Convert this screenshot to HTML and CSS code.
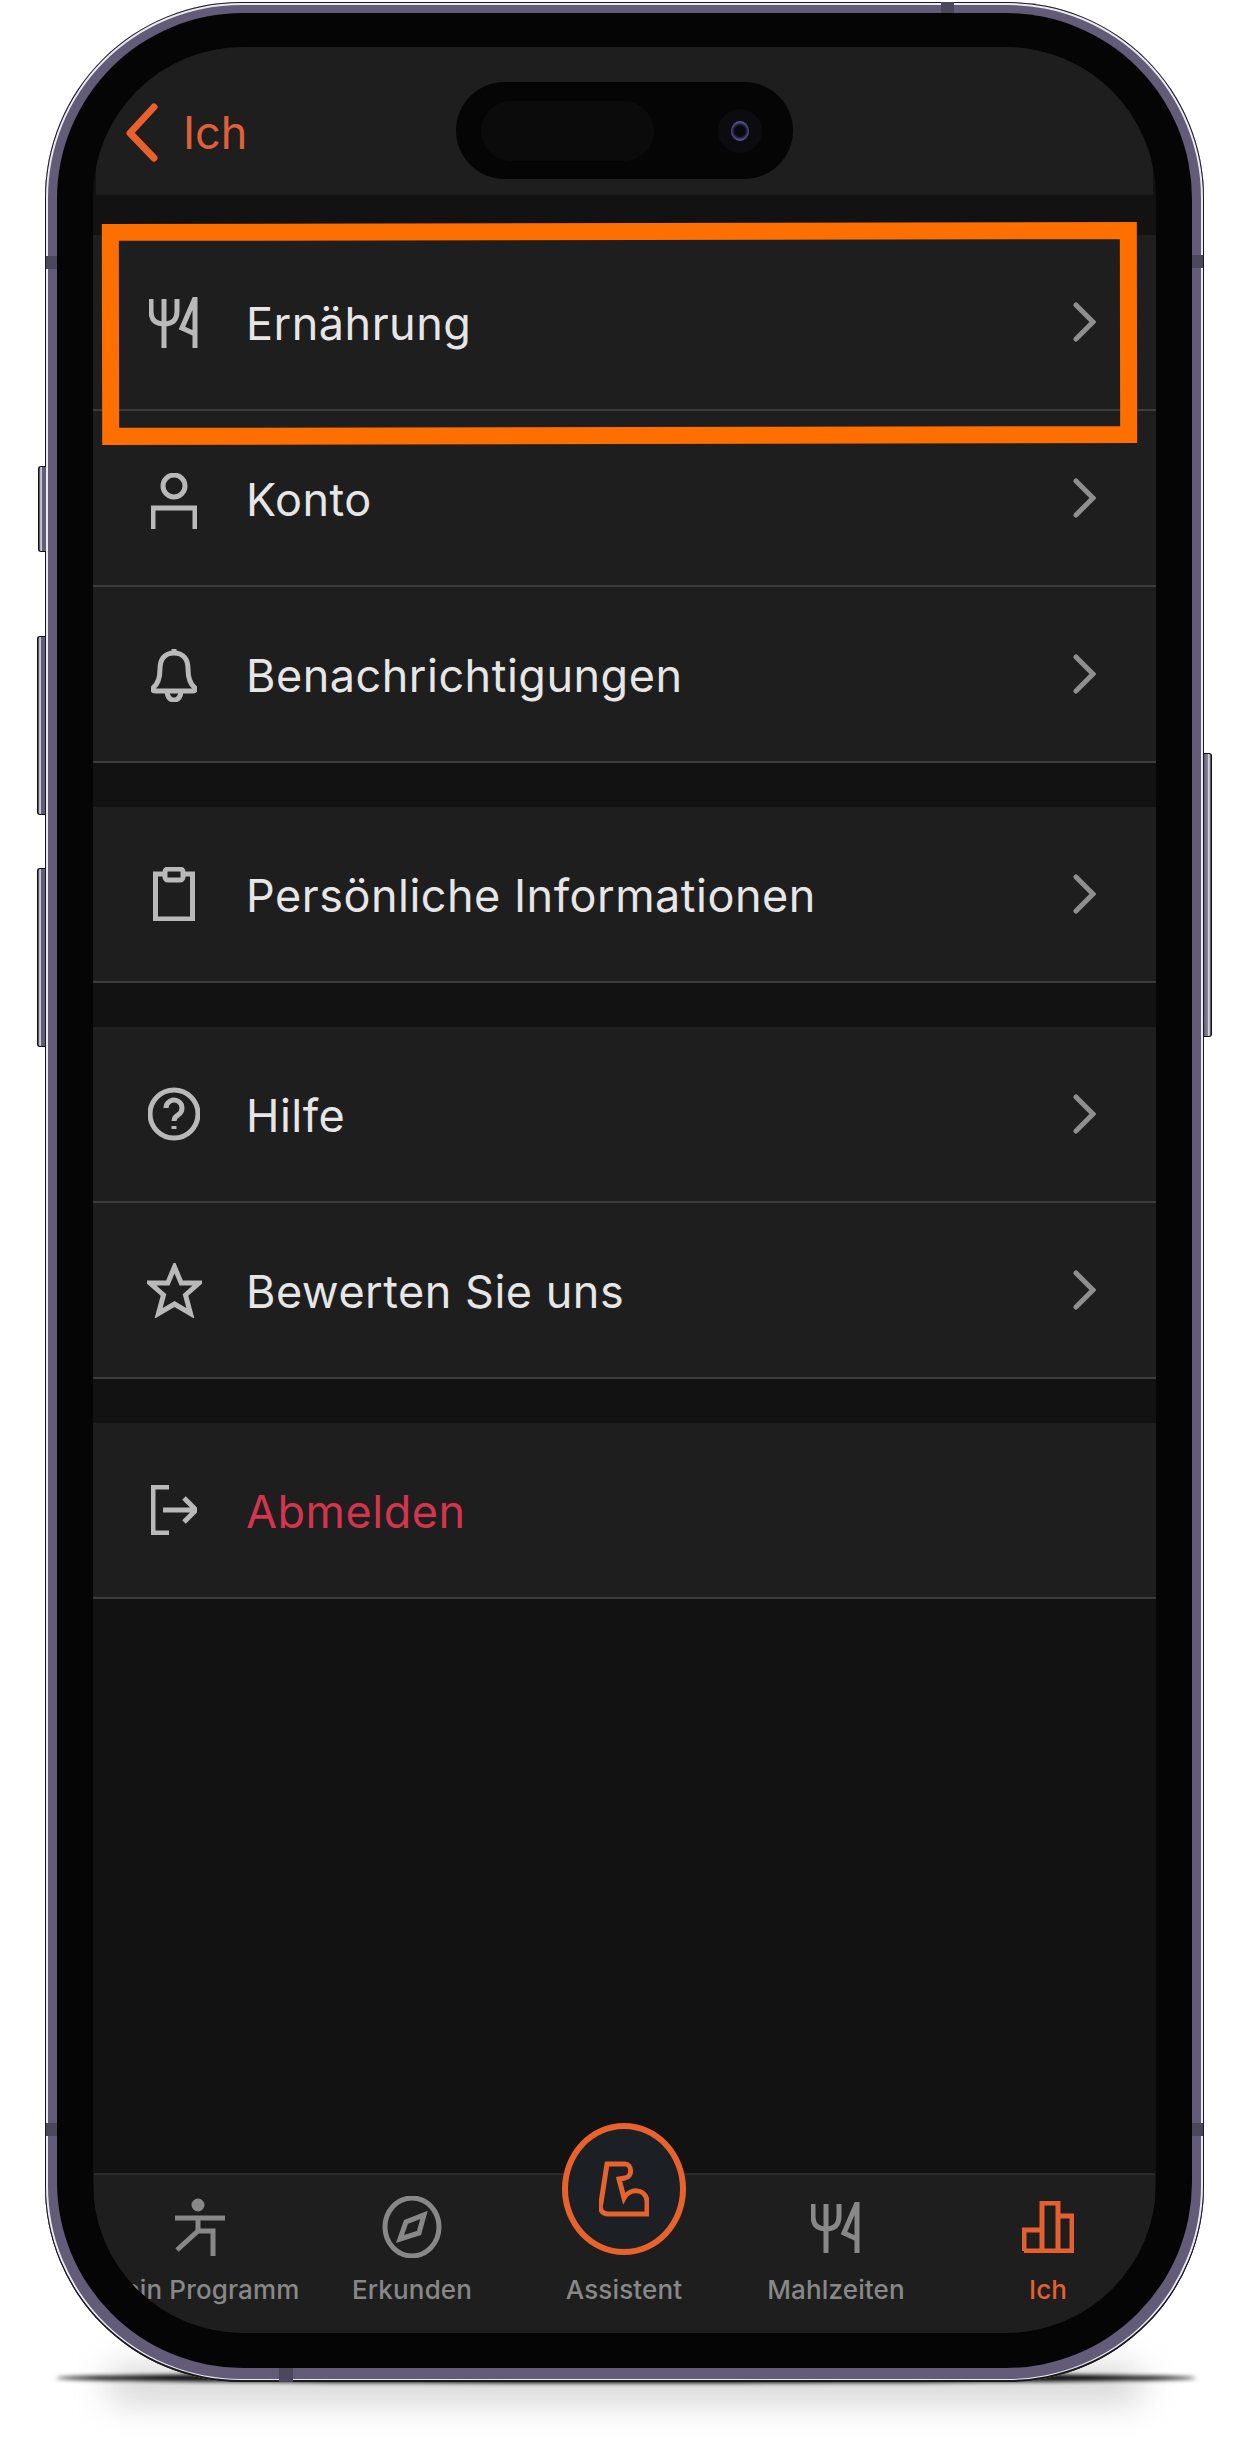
FILE: index.html
```html
<!DOCTYPE html>
<html lang="de">
<head>
  <meta charset="UTF-8">
  <meta name="viewport" content="width=device-width, initial-scale=1.0">
  <title>Ich</title>
  <link rel="stylesheet" href="styles.css">
</head>
<body>
  <svg class="defs" width="0" height="0">
    <symbol id="i-food" viewBox="0 0 50 54">
      <path d="M2 4V16Q2 29 15 29Q28 29 28 16V4M15 4V53M46 2V53M46 3L33 33L46 39"/>
    </symbol>
    <symbol id="i-chevron" viewBox="0 0 23 40">
      <path d="M3 3L20 20L3 37"/>
    </symbol>
  </svg>

  <div class="page">
    <div class="shadow-soft"></div>
    <div class="shadow-contact"></div>

    <div class="phone">
      <span class="side-btn side-btn-mute"></span>
      <span class="side-btn side-btn-up"></span>
      <span class="side-btn side-btn-down"></span>
      <span class="side-btn side-btn-power"></span>
      <span class="band band-top"></span>
      <span class="band band-left"></span>
      <span class="band band-right"></span>
      <span class="band band-left-low"></span>
      <span class="band band-right-low"></span>
      <span class="band band-bottom"></span>

      <div class="bezel">
        <div class="screen">
          <header class="top-bar">
            <svg class="back-icon" width="34" height="59" viewBox="0 0 34 59"><path d="M29 4L5 30L29 55"/></svg>
            <span class="back-label">Ich</span>
          </header>

          <div class="island">
            <span class="island-sensor"></span>
            <span class="island-camera"><span class="island-lens"></span></span>
          </div>

          <main class="menu">
            <section class="menu-group">
              <div class="menu-row">
                <span class="menu-icon"><svg class="icon" width="50" height="54"><use href="#i-food"/></svg></span>
                <span class="menu-label">Ernährung</span>
                <svg class="chevron" width="23" height="40"><use href="#i-chevron"/></svg>
              </div>
              <div class="menu-row">
                <span class="menu-icon menu-icon-low">
                  <svg class="icon" width="46" height="56" viewBox="0 0 46 56"><circle cx="23" cy="13" r="11"/><path d="M2 56V35H44V56"/></svg>
                </span>
                <span class="menu-label">Konto</span>
                <svg class="chevron" width="23" height="40"><use href="#i-chevron"/></svg>
              </div>
              <div class="menu-row">
                <span class="menu-icon">
                  <svg class="icon" width="46" height="55" viewBox="0 0 46 55"><path d="M23 2V6M23 6C13 6 9 13 9 22C9 32 7 37 2 41Q1 44 4 44H42Q45 44 44 41C39 37 37 32 37 22C37 13 33 6 23 6ZM16 45Q17 53 23 53Q29 53 30 45"/></svg>
                </span>
                <span class="menu-label">Benachrichtigungen</span>
                <svg class="chevron" width="23" height="40"><use href="#i-chevron"/></svg>
              </div>
            </section>

            <section class="menu-group">
              <div class="menu-row">
                <span class="menu-icon">
                  <svg class="icon" width="42" height="54" viewBox="0 0 42 54"><rect x="2.5" y="7" width="37" height="45"/><rect class="icon-clip" x="12" y="2" width="18" height="11" rx="3"/></svg>
                </span>
                <span class="menu-label">Persönliche Informationen</span>
                <svg class="chevron" width="23" height="40"><use href="#i-chevron"/></svg>
              </div>
            </section>

            <section class="menu-group">
              <div class="menu-row">
                <span class="menu-icon">
                  <svg class="icon" width="52" height="56" viewBox="0 0 52 56"><circle cx="26" cy="28" r="24"/><path d="M18 22a8 8 0 1 1 12 7c-3 1.7-4 3-4 6M26 40v3"/></svg>
                </span>
                <span class="menu-label">Hilfe</span>
                <svg class="chevron" width="23" height="40"><use href="#i-chevron"/></svg>
              </div>
              <div class="menu-row">
                <span class="menu-icon">
                  <svg class="icon" width="55" height="55" viewBox="0 0 55 55"><path d="M27.5 4L34.2 20H52L38.5 32L43.5 50.5L27.5 41L11.5 50.5L16.5 32L3 20H20.8Z"/></svg>
                </span>
                <span class="menu-label">Bewerten Sie uns</span>
                <svg class="chevron" width="23" height="40"><use href="#i-chevron"/></svg>
              </div>
            </section>

            <section class="menu-group">
              <div class="menu-row">
                <span class="menu-icon">
                  <svg class="icon" width="46" height="50" viewBox="0 0 46 50"><path d="M18 2H2V48H18M12 25H44M33 13L45 25L33 37"/></svg>
                </span>
                <span class="menu-label menu-label-danger">Abmelden</span>
              </div>
            </section>
          </main>

          <nav class="tab-bar">
            <div class="tab">
              <span class="tab-icon">
                <svg class="icon" width="50" height="58" viewBox="0 0 50 58"><circle class="icon-solid" cx="23" cy="7" r="5"/><path d="M0 20H50M23 20V33M38 58V33H23L2 52"/></svg>
              </span>
              <span class="tab-label">Mein Programm</span>
            </div>
            <div class="tab">
              <span class="tab-icon">
                <svg class="icon" width="60" height="62" viewBox="0 0 60 62"><ellipse cx="30" cy="31" rx="27" ry="29"/><path d="M42 19L37 37L18 43L24 26Z"/></svg>
              </span>
              <span class="tab-label">Erkunden</span>
            </div>
            <div class="tab tab-main">
              <span class="tab-fab">
                <svg class="icon" width="50" height="56" viewBox="0 0 50 56"><path d="M8 3H26C33 3 34 16 26 17L20 18L25 37C30 28 46 26 48 40V53H9C3 53 0 48 2 42Z"/></svg>
              </span>
              <span class="tab-label">Assistent</span>
            </div>
            <div class="tab">
              <span class="tab-icon"><svg class="icon" width="50" height="54"><use href="#i-food"/></svg></span>
              <span class="tab-label">Mahlzeiten</span>
            </div>
            <div class="tab tab-active">
              <span class="tab-icon">
                <svg class="icon" width="52" height="52" viewBox="0 0 52 52"><path d="M2 50V29H20M20 50V2H36V50M36 15H50V50H2"/></svg>
              </span>
              <span class="tab-label">Ich</span>
            </div>
          </nav>
        </div>
      </div>
    </div>

    <div class="highlight"></div>
  </div>
</body>
</html>
```

FILE: styles.css
```css
* {
  box-sizing: border-box;
}

body {
  margin: 0;
  background: #ffffff;
  font-family: "Inter", "Liberation Sans", sans-serif;
}

.defs {
  position: absolute;
}

.page {
  position: relative;
  width: 1253px;
  height: 2464px;
  padding: 2px 0 0 45px;
  overflow: hidden;
}

/* shadow under the phone */
.shadow-soft {
  position: absolute;
  left: 110px;
  top: 2372px;
  width: 1030px;
  height: 26px;
  background: #c4c4c4;
  filter: blur(18px);
}

.shadow-contact {
  position: absolute;
  left: 56px;
  top: 2373px;
  width: 1140px;
  height: 10px;
  background: #000000;
  border-radius: 50%;
  filter: blur(2px);
}

/* phone body */
.phone {
  position: relative;
  width: 1159px;
  height: 2380px;
  padding: 11px 12px 14px;
  background: #625c78;
  border-radius: 196px;
  box-shadow: inset 0 -2px 0 #1a1a1e, inset 0 0 0 1px #1a1a1e, inset 0 0 0 3px #e9e8ef;
}

.side-btn {
  position: absolute;
  width: 8px;
  background: linear-gradient(90deg, #2a2833, #f1f0f6 30%, #625c78 50%, #625c78);
  border: 1px solid #111111;
  border-right: 0;
  border-radius: 3px 0 0 3px;
}

.side-btn-mute { left: -7px; top: 464px; height: 86px; }
.side-btn-up { left: -8px; top: 634px; height: 179px; }
.side-btn-down { left: -8px; top: 866px; height: 179px; }

.side-btn-power {
  right: -8px;
  top: 751px;
  height: 284px;
  background: linear-gradient(270deg, #2a2833, #f1f0f6 30%, #8a8599 50%, #625c78);
  border: 1px solid #111111;
  border-left: 0;
  border-radius: 0 3px 3px 0;
}

.band {
  position: absolute;
  background: #4b475c;
}

.band-top { left: 896px; top: 0; width: 13px; height: 11px; }
.band-left { left: 1px; top: 254px; width: 11px; height: 13px; }
.band-right { right: 1px; top: 253px; width: 11px; height: 13px; }
.band-left-low { left: 1px; top: 2121px; width: 11px; height: 13px; }
.band-right-low { right: 1px; top: 2121px; width: 11px; height: 13px; }
.band-bottom { left: 234px; bottom: 0; width: 14px; height: 14px; }

.bezel {
  height: 100%;
  padding: 34px 36px 35px;
  background: #050505;
  border-radius: 186px;
}

.screen {
  position: relative;
  display: flex;
  flex-direction: column;
  height: 100%;
  overflow: hidden;
  background: #121212;
  border-radius: 150px;
}

/* top bar */
.top-bar {
  display: flex;
  align-items: center;
  gap: 24px;
  height: 148px;
  margin: 0 3px;
  padding: 22px 0 0 29px;
  background: #1e1e1e;
}

.back-icon {
  fill: none;
  stroke: #e8602c;
  stroke-width: 7;
  stroke-linecap: round;
  stroke-linejoin: round;
}

.back-label {
  font-size: 45px;
  color: #e0603a;
}

.island {
  position: absolute;
  left: 363px;
  top: 35px;
  display: flex;
  align-items: center;
  width: 337px;
  height: 97px;
  padding-left: 25px;
  background: #050505;
  border-radius: 49px;
}

.island-sensor {
  width: 173px;
  height: 60px;
  background: #0b0b0b;
  border-radius: 30px;
}

.island-camera {
  display: flex;
  align-items: center;
  justify-content: center;
  width: 44px;
  height: 44px;
  margin-left: 64px;
  background: #0c0c10;
  border-radius: 50%;
}

.island-lens {
  width: 18px;
  height: 20px;
  background: radial-gradient(circle, #08080f 40%, #7a74c4 80%);
  border-radius: 50%;
}

/* menu list */
.menu {
  display: flex;
  flex-direction: column;
  gap: 44px;
  flex: 1;
  padding-top: 40px;
}

.menu-row {
  display: flex;
  align-items: center;
  height: 176px;
  padding: 0 60px 0 49px;
  background: #1e1e1e;
  border-bottom: 2px solid #3c3c3c;
}

.menu-icon {
  display: flex;
  align-items: center;
  justify-content: center;
  width: 64px;
  color: #b9b9b9;
}

.menu-icon-low {
  padding-top: 6px;
}

.menu-label {
  margin-left: 40px;
  padding-top: 3px;
  font-size: 45px;
  letter-spacing: 0.5px;
  color: #e6e6e6;
}

.menu-label-danger {
  color: #d5344f;
}

.chevron {
  margin-left: auto;
  color: #8f8f8f;
  fill: none;
  stroke: currentColor;
  stroke-width: 5;
  stroke-linecap: round;
}

.icon {
  fill: none;
  stroke: currentColor;
  stroke-width: 5;
}

.icon-clip {
  fill: #1e1e1e;
}

.icon-solid {
  fill: currentColor;
  stroke-width: 3;
}

/* bottom tabs */
.tab-bar {
  display: grid;
  grid-template-columns: repeat(5, 212px);
  height: 160px;
  margin: 0 1px;
  background: #1e1e1e;
  border-top: 2px solid #2b2b2b;
}

.tab {
  display: flex;
  flex-direction: column;
  align-items: center;
  color: #888888;
}

.tab-icon {
  display: flex;
  align-items: center;
  justify-content: center;
  height: 62px;
  margin-top: 21px;
}

.tab-label {
  margin-top: 16px;
  font-size: 26px;
  font-weight: 500;
  letter-spacing: 0.15px;
  line-height: 32px;
  white-space: nowrap;
}

.tab-active {
  color: #e4602f;
}

.tab-fab {
  display: flex;
  align-items: center;
  justify-content: center;
  width: 124px;
  height: 132px;
  margin-top: -52px;
  margin-bottom: 3px;
  color: #e8622c;
  background: #1c1f23;
  border: 6px solid #e8622c;
  border-radius: 50%;
}

/* orange marker drawn over the first row */
.highlight {
  position: absolute;
  left: 102px;
  top: 223px;
  width: 1035px;
  height: 221px;
  border: 17px solid #ff6f00;
  transform: rotate(-0.1deg);
}
```
